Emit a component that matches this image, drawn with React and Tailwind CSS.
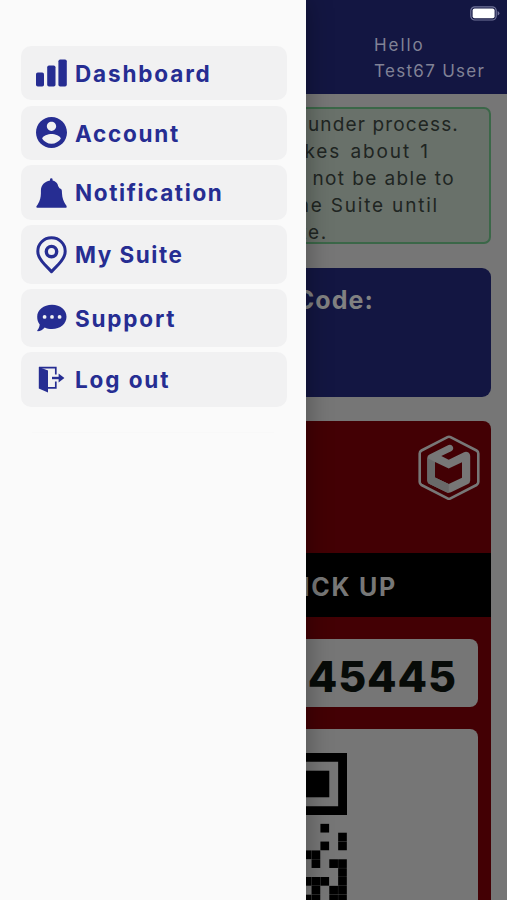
import React from "react";

const BarsIcon = () => (
  <svg width="31" height="28" viewBox="0 0 31 28" fill="currentColor">
    <rect x="0" y="13.5" width="8" height="14" rx="1.8" />
    <rect x="11.2" y="6.5" width="8.3" height="21" rx="1.8" />
    <rect x="22.4" y="0.5" width="8.4" height="27" rx="1.8" />
  </svg>
);

const UserIcon = () => (
  <svg width="31" height="31" viewBox="2 2 20 20" fill="currentColor">
    <path d="M12 2C6.48 2 2 6.48 2 12s4.48 10 10 10 10-4.48 10-10S17.52 2 12 2zm0 3c1.66 0 3 1.34 3 3s-1.34 3-3 3-3-1.34-3-3 1.34-3 3-3zm0 14.2c-2.5 0-4.71-1.28-6-3.22.03-1.99 4-3.08 6-3.08 1.99 0 5.97 1.09 6 3.08-1.29 1.94-3.5 3.22-6 3.22z" />
  </svg>
);

const BellIcon = () => (
  <svg width="31" height="30" viewBox="0 0 31 30" fill="currentColor">
    <path d="M14 2.6V1.4Q14 .3 15.3 .3T16.6 1.4V2.6C19 3.1 20.8 4.6 21.7 6.4 22.2 8.3 22.9 10 24.6 10.8 26.3 11.7 25.8 13.5 26 15.5 26.2 20 27.6 23.4 29.4 26.2 30.2 27.3 31 28 30.6 29.3Q30.4 29.8 29.6 29.8H1.4Q.4 29.8 .3 29C.2 28.2 1.2 27.3 2 26 4 22.8 4.8 19.4 4.9 15.5V12.5C5 7.2 8.6 3.5 14 2.6Z" />
  </svg>
);

const PinIcon = () => (
  <svg width="31" height="38" viewBox="0 0 31 38" fill="none" stroke="currentColor">
    <path
      d="M15.5 1.8C7.8 1.8 1.8 7.7 1.8 15.3C1.8 20.2 4.8 24.4 8.4 28.2L15.5 35.6L22.6 28.2C26.2 24.4 29.2 20.2 29.2 15.3C29.2 7.7 23.2 1.8 15.5 1.8Z"
      strokeWidth="3"
      strokeLinejoin="round"
    />
    <circle cx="15.5" cy="15.6" r="5.2" strokeWidth="3.4" />
  </svg>
);

const ChatIcon = () => (
  <svg width="31" height="28" viewBox="0 0 31 28">
    <path
      d="M16 .7C24.4 .7 30.5 5.7 30.5 12.7S24.4 24.9 16 24.9C13.3 24.9 10.8 24.4 8.7 23.4 6.8 25.6 4.4 27 1.7 27.2 1.2 27.2 1 26.7 1.4 26.3 2.7 24.8 3.6 22.6 3.7 20.5 2 18.3 1.2 15.7 1.2 12.7 1.2 5.7 7.6 .7 16 .7Z"
      fill="currentColor"
    />
    <circle cx="8.6" cy="12.9" r="1.9" fill="#f1f1f2" />
    <circle cx="16" cy="12.9" r="1.9" fill="#f1f1f2" />
    <circle cx="23.6" cy="12.9" r="1.9" fill="#f1f1f2" />
  </svg>
);

const ExitIcon = () => (
  <svg width="31" height="28" viewBox="0 0 31 28">
    <path d="M2.8 1L12 4.6V26.6L2.8 22.6Z" fill="currentColor" />
    <path d="M3 1.6H19.8V8.5M19.8 15.6V21.8H12" fill="none" stroke="currentColor" strokeWidth="1.7" />
    <path d="M16 12H24" stroke="currentColor" strokeWidth="2.4" />
    <path d="M22.6 7.6L28.4 12L22.6 16.4Z" fill="currentColor" />
  </svg>
);

const items = [
  { label: "Dashboard", Icon: BarsIcon, box: "h-[54px] mb-[6px]", tx: "tracking-[1.85px]" },
  { label: "Account", Icon: UserIcon, box: "h-[54px] mb-[5px]", tx: "tracking-[1.75px]", iy: "-translate-y-px" },
  { label: "Notification", Icon: BellIcon, box: "h-[55px] mb-[5px]", tx: "tracking-[1.6px]" },
  { label: "My Suite", Icon: PinIcon, box: "h-[59px] mb-[5px]", tx: "tracking-[1.5px]" },
  { label: "Support", Icon: ChatIcon, box: "h-[58px] mb-[5px]", tx: "tracking-[1.8px]" },
  { label: "Log out", Icon: ExitIcon, box: "h-[55px]", tx: "tracking-[1.9px]" },
];

const notice = [
  { text: "under process.", style: "pr-[30px] tracking-[1.15px]" },
  { text: "takes about 1", style: "pr-[59px] tracking-[1.9px] [word-spacing:2px]" },
  { text: "not be able to", style: "pr-[34px] tracking-[1.4px]" },
  { text: "the Suite until", style: "pr-[50px] tracking-[1.8px]" },
  { text: "complete.", style: "pr-[161px] tracking-[1.7px]" },
];

const modules = [
  [18, 8], [20, 9], [18, 10], [20, 10], [16, 11], [17, 11], [17, 12], [19, 12], [20, 12], [20, 13],
  [16, 14], [17, 14], [18, 14], [20, 14], [17, 15], [19, 15], [20, 15], [16, 16], [17, 16], [19, 16], [20, 16],
];

const QrCode = () => (
  <svg width="186" height="186" viewBox="0 0 21 21" fill="#000" className="shrink-0">
    {[0, 14].map((x) => (
      <g key={x}>
        <path fillRule="evenodd" d={`M${x} 0h7v7h-7zM${x + 1} 1v5h5v-5z`} />
        <rect x={x + 2} y="2" width="3" height="3" />
      </g>
    ))}
    {modules.map(([x, y]) => (
      <rect key={`${x}-${y}`} x={x} y={y} width="0.98" height="0.98" />
    ))}
  </svg>
);

const Logo = () => (
  <svg width="62" height="66" viewBox="0 0 62 66" fill="none" strokeLinejoin="round">
    <path d="M29.5 2.2Q31 1.4 32.5 2.2L58.5 15.5Q60.3 16.5 60.3 18.5V47Q60.3 49 58.5 50L32.5 63.4Q31 64.2 29.5 63.4L3.5 50Q1.7 49 1.7 47V18.5Q1.7 16.5 3.5 15.5Z" stroke="#777777" strokeWidth="2.6" />
    <path
      fillRule="evenodd"
      fill="#777777"
      d="M11.5 19.5L29.5 10.4Q32.6 9 34.6 11.2Q36.4 14.4 33.2 16.3L23.3 21L30.7 24.7L46 17.2Q48.5 16.2 50.5 17.6Q52.2 18.8 52.2 21V45.5Q52.2 47.8 50 49L33.5 57Q30.8 58.4 28 57L11.5 49Q9.3 47.8 9.3 45.5V22.8Q9.3 20.6 11.5 19.5ZM17 27V42.6L30.7 49L44 42.8V27.2L30.7 33.4Z"
    />
    <path d="M9.3 23L17 27V42.6L30.7 49V58Q29.3 57.8 28 57L11.5 49Q9.3 47.8 9.3 45.5Z" fill="#696969" />
  </svg>
);

const Battery = () => (
  <svg width="30" height="15" viewBox="0 0 30 15">
    <rect x="0.8" y="0.8" width="25.4" height="13.2" rx="4" fill="none" stroke="#72749a" strokeWidth="1.2" />
    <rect x="2.6" y="2.6" width="22" height="9.6" rx="2" fill="#fff" />
    <path d="M27.6 5v4.6q1.8-.7 1.8-2.3T27.6 5z" fill="#72749a" />
  </svg>
);

export default function App() {
  return (
    <div className="relative h-[900px] w-[507px] overflow-hidden bg-[#767676] font-['Inter','Liberation_Sans',sans-serif]">
      <main className="flex flex-col">
        <header className="flex h-[94px] flex-col items-end bg-[#131642] pt-[6px]">
          <div className="mr-[7px] h-[15px]"><Battery /></div>
          <div className="mr-[16px] mt-[11px] w-[117px] whitespace-nowrap text-[17px] leading-[26px] text-[#818296]">
            <p className="tracking-[1.95px]">Hello</p>
            <p className="tracking-[1.3px]">Test67 User</p>
          </div>
        </header>

        <section className="mx-4 mt-[13px] h-[137px] overflow-hidden rounded-[7px] border-2 border-[#3b6748] bg-[#69716a] pt-[2px] text-right text-[19px] leading-[27px] text-[#202522]">
          {notice.map((l) => (
            <p key={l.text} className={l.style}>{l.text}</p>
          ))}
        </section>

        <section className="mx-4 mt-[24px] h-[129px] rounded-[9px] bg-[#131642] pr-[117px] pt-[14px] text-right text-[25px] font-bold leading-[36px] tracking-[1.1px] text-[#818181]">
          Code:
        </section>

        <section className="mx-4 mt-[24px] h-[500px] rounded-t-[8px] bg-[#430004]">
          <div className="flex h-[132px] justify-end pr-[11px] pt-[14px]"><Logo /></div>
          <div className="flex h-[64px] items-center justify-end bg-black pr-[94px] pt-[5px] text-[25px] font-bold tracking-[1.7px] text-[#777777]">
            <span className="pr-[8px]">PICK</span>
            <span>UP</span>
          </div>
          <div className="mx-[13px] mt-[22px] flex h-[68px] items-center justify-end rounded-[8px] bg-[#767676] pr-[21px] pt-[7px] text-[43px] font-extrabold tracking-[0.9px] text-[#070b08]">
            45445
          </div>
          <div className="mx-[13px] mt-[22px] flex h-[300px] justify-end rounded-[8px] bg-[#767676] pr-[131px] pt-[24px]">
            <QrCode />
          </div>
        </section>
      </main>

      <aside className="absolute left-0 top-0 h-full w-[306px] bg-[#fafafa] pt-[46px] shadow-[0_0_24px_rgba(0,0,0,0.35)]">
        <nav className="ml-[21px] flex w-[266px] flex-col text-[#262d92]">
          {items.map(({ label, Icon, box, tx, iy }) => (
            <a key={label} className={`flex items-center rounded-[10px] bg-[#f1f1f2] pl-[14.5px] ${box}`}>
              <span className={iy}><Icon /></span>
              <span className={`ml-[8.5px] whitespace-nowrap pt-px text-[22.5px] font-bold leading-7 ${tx}`}>{label}</span>
            </a>
          ))}
        </nav>
        <div className="mx-[32px] mt-[25px] h-[15px] border-t border-[#f8f8f8]" />
      </aside>
    </div>
  );
}
